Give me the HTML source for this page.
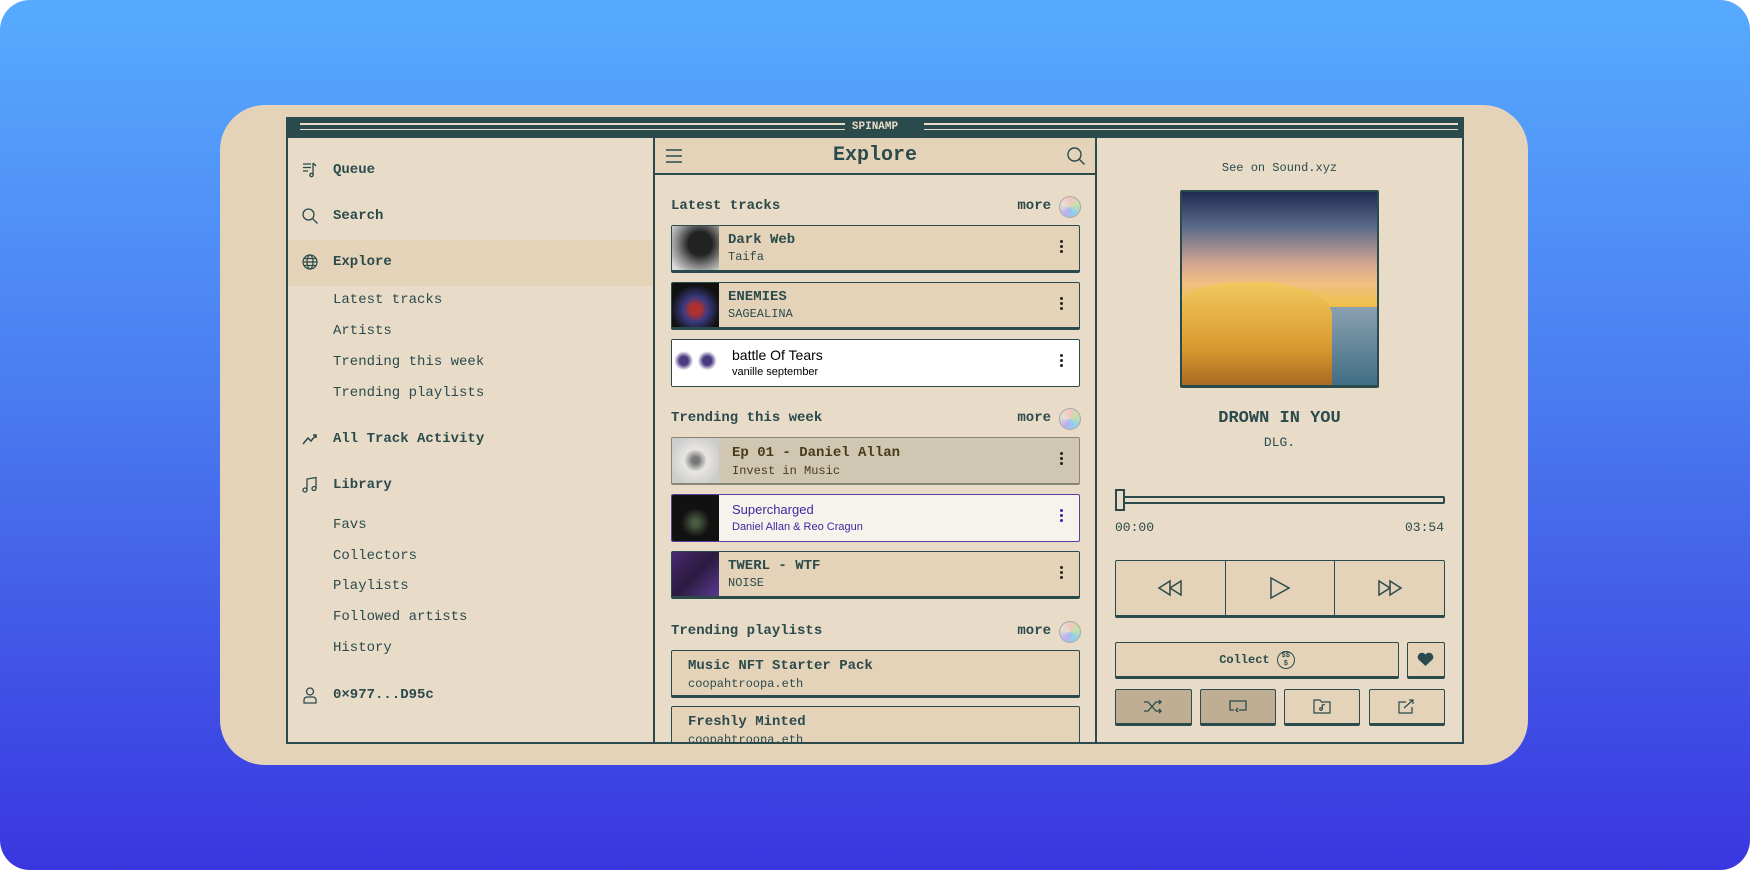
<!DOCTYPE html>
<html><head><meta charset="utf-8">
<style>
*{margin:0;padding:0;box-sizing:border-box}
body{width:1750px;height:870px;background:#fff;position:relative;overflow:hidden;font-family:"Liberation Mono",monospace;color:#2b4a4c}
.bg{position:absolute;left:0;top:0;width:1750px;height:870px;border-radius:30px;background:linear-gradient(180deg,#57abff 0%,#4a7cf0 45%,#3a36df 100%)}
.card{position:absolute;left:220px;top:105px;width:1308px;height:660px;border-radius:45px;background:#e4d3b8}
.app{position:absolute;left:286px;top:117px;width:1178px;height:627px;background:#e8dcc8;border:2px solid #2b4a4c;border-top:none}
.tb{position:absolute;left:0;top:0;width:100%;height:21px;background:#2b4a4c}
.tb .l{position:absolute;top:6px;height:7px;border-top:2px solid #e8dcc8;border-bottom:1.5px solid #e8dcc8}
.tb span{position:absolute;left:0;width:100%;text-align:center;top:4px;color:#e8dcc8;font-size:11px;font-weight:bold}
.abs{position:absolute}
.side{position:absolute;left:0;top:21px;width:367px;bottom:0;border-right:2px solid #2b4a4c}
.si{position:absolute;left:45px;font-size:14px;white-space:nowrap;transform:translateY(-50%)}
.si.b{font-weight:bold}
.ic{position:absolute;left:13px;transform:translateY(-50%)}
.mid{position:absolute;left:367px;top:21px;width:442px;bottom:0;border-right:2px solid #2b4a4c;overflow:hidden}
.mh{position:absolute;left:0;top:0;width:100%;height:37px;background:#e4d3b8;border-bottom:2px solid #2b4a4c}
.sec{position:absolute;left:16px;right:14px;font-size:14px;font-weight:bold}
.sec .m{position:absolute;right:30px;top:0}
.sec .c{position:absolute;right:0;top:-2px;width:22px;height:22px;border-radius:50%;background:conic-gradient(#f0c6c0,#c8e0a8,#8fd0e8,#b8b0f0,#e8e0d0,#f0c6c0);border:1px solid #aaa}
.tr{position:absolute;left:16px;width:409px;height:48px;background:#e4d3b8;border:1.5px solid #2b4a4c;border-bottom-width:3px;border-radius:2px;overflow:hidden}
.tr .th{position:absolute;left:0;top:0;width:47px;height:100%}
.tr .t{position:absolute;left:56px;top:6px;font-size:14px;font-weight:bold;white-space:nowrap}
.tr .a{position:absolute;left:56px;top:24px;font-size:12px;white-space:nowrap}
.tr .d{position:absolute;right:16px;top:14px;width:3px}
.tr .d i{display:block;width:3px;height:3px;background:#222;border-radius:50%;margin-bottom:2px}
.sans{font-family:"Liberation Sans",sans-serif}
.right{position:absolute;left:809px;top:21px;right:0;bottom:0}
.btn{position:absolute;background:#e4d3b8;border:1.5px solid #2b4a4c;border-bottom-width:3px;border-radius:2px}
</style></head><body>
<div class="bg"></div>
<div class="card"></div>
<div class="app">
 <div class="tb"><div class="l" style="left:12px;width:545px"></div><div class="l" style="left:636px;width:534px"></div><span>SPINAMP</span></div>
 <div class="side">
  <div class="abs" style="left:0;top:102px;width:365px;height:46px;background:#e4d3b8"></div>
  <svg class="ic" style="top:32px" width="18" height="18" viewBox="0 0 18 18" fill="none" stroke="#2b4a4c" stroke-width="1.3"><path d="M2 3h8M2 6.5h8M2 10h5M12 2v12M12 2l3 3"/><circle cx="10.5" cy="14" r="1.7"/></svg>
  <div class="si b" style="top:32px">Queue</div>
  <svg class="ic" style="top:78px" width="18" height="18" viewBox="0 0 18 18" fill="none" stroke="#2b4a4c" stroke-width="1.3"><circle cx="7.5" cy="7.5" r="5.5"/><path d="M11.5 11.5l5 5"/></svg>
  <div class="si b" style="top:78px">Search</div>
  <svg class="ic" style="top:124px" width="18" height="18" viewBox="0 0 18 18" fill="none" stroke="#2b4a4c" stroke-width="1.2"><circle cx="9" cy="9" r="7"/><ellipse cx="9" cy="9" rx="3" ry="7"/><path d="M2 9h14M3 5.5h12M3 12.5h12"/></svg>
  <div class="si b" style="top:124px">Explore</div>
  <div class="si" style="top:162px">Latest tracks</div>
  <div class="si" style="top:193px">Artists</div>
  <div class="si" style="top:224px">Trending this week</div>
  <div class="si" style="top:255px">Trending playlists</div>
  <svg class="ic" style="top:301px" width="18" height="18" viewBox="0 0 18 18" fill="none" stroke="#2b4a4c" stroke-width="1.5"><path d="M2 14l5-6 3 3 5-6M12 5h3v3"/></svg>
  <div class="si b" style="top:301px">All Track Activity</div>
  <svg class="ic" style="top:347px" width="18" height="18" viewBox="0 0 18 18" fill="none" stroke="#2b4a4c" stroke-width="1.3"><path d="M6 14V3l9-1.5v11"/><circle cx="4" cy="14" r="2"/><circle cx="13" cy="12.5" r="2"/></svg>
  <div class="si b" style="top:347px">Library</div>
  <div class="si" style="top:387px">Favs</div>
  <div class="si" style="top:418px">Collectors</div>
  <div class="si" style="top:448px">Playlists</div>
  <div class="si" style="top:479px">Followed artists</div>
  <div class="si" style="top:510px">History</div>
  <svg class="ic" style="top:557px" width="18" height="18" viewBox="0 0 18 18" fill="none" stroke="#2b4a4c" stroke-width="1.3"><circle cx="9" cy="5.5" r="3.5"/><path d="M3 17v-3a3 3 0 0 1 3-3h6a3 3 0 0 1 3 3v3z"/></svg>
  <div class="si b" style="top:557px">0×977...D95c</div>
 </div>
 <div class="mid">
  <div class="mh">
   <svg class="abs" style="left:10px;top:10px" width="18" height="16" viewBox="0 0 18 16" stroke="#2b4a4c" stroke-width="1.5"><path d="M1 2h16M1 8h16M1 14h16"/></svg>
   <div class="abs" style="left:0;width:100%;text-align:center;top:6px;font-size:20px;font-weight:bold">Explore</div>
   <svg class="abs" style="left:411px;top:8px" width="20" height="20" viewBox="0 0 20 20" fill="none" stroke="#2b4a4c" stroke-width="1.4"><circle cx="8.5" cy="8.5" r="6.5"/><path d="M13 13l5.5 5.5"/></svg>
  </div>
  <div class="sec" style="top:60px">Latest tracks<span class="m">more</span><span class="c"></span></div>
  <div class="tr" style="top:87px"><div class="th" style="background:radial-gradient(circle at 60% 40%,#222 30%,#888 60%,#ddd 90%)"></div><div class="t">Dark Web</div><div class="a">Taifa</div><div class="d"><i></i><i></i><i></i></div></div>
  <div class="tr" style="top:144px"><div class="th" style="background:radial-gradient(circle at 50% 60%,#b03030 15%,#3a3a80 35%,#111 70%)"></div><div class="t">ENEMIES</div><div class="a">SAGEALINA</div><div class="d"><i></i><i></i><i></i></div></div>
  <div class="tr sans" style="top:201px;background:#fff;border-bottom-width:1.5px"><div class="th" style="background:radial-gradient(circle at 25% 45%,#4a3a80 10%,#fff 22%),radial-gradient(circle at 75% 45%,#4a3a80 10%,#fff 22%);background-blend-mode:multiply"></div><div class="t" style="left:60px;top:7px;font-weight:normal;color:#000;font-size:14px">battle Of Tears</div><div class="a" style="left:60px;top:26px;color:#000;font-size:11px">vanille september</div><div class="d"><i></i><i></i><i></i></div></div>
  <div class="sec" style="top:272px">Trending this week<span class="m">more</span><span class="c"></span></div>
  <div class="tr" style="top:299px;background:#cfc7b1;border-bottom-width:2px;border-color:#8a8676"><div class="th" style="background:radial-gradient(circle,#777 10%,#e8e6e0 35%,#ccc 80%)"></div><div class="t" style="left:60px;top:7px;color:#4a3a1a">Ep 01 - Daniel Allan</div><div class="a" style="left:60px;top:26px;color:#4a3a1a">Invest in Music</div><div class="d"><i></i><i></i><i></i></div></div>
  <div class="tr sans" style="top:356px;background:#f6f2ec;border-color:#5a3fa0;border-bottom-width:1.5px"><div class="th" style="background:radial-gradient(circle at 50% 60%,#4a5a40 8%,#111 40%)"></div><div class="t" style="left:60px;top:7px;font-weight:normal;color:#3b2aa0;font-size:13px">Supercharged</div><div class="a" style="left:60px;top:26px;color:#3b2aa0;font-size:11px">Daniel Allan &amp; Reo Cragun</div><div class="d"><i style="background:#3b2aa0"></i><i style="background:#3b2aa0"></i><i style="background:#3b2aa0"></i></div></div>
  <div class="tr" style="top:413px"><div class="th" style="background:linear-gradient(135deg,#4a2a70,#2a1a40 50%,#5a3a90)"></div><div class="t">TWERL - WTF</div><div class="a">NOISE</div><div class="d"><i></i><i></i><i></i></div></div>
  <div class="sec" style="top:485px">Trending playlists<span class="m">more</span><span class="c"></span></div>
  <div class="tr" style="top:512px"><div class="t" style="left:16px;top:7px">Music NFT Starter Pack</div><div class="a" style="left:16px;top:26px">coopahtroopa.eth</div></div>
  <div class="tr" style="top:568px"><div class="t" style="left:16px;top:7px">Freshly Minted</div><div class="a" style="left:16px;top:26px">coopahtroopa.eth</div></div>
 </div>
 <div class="right">
  <div class="abs" style="left:0;width:100%;text-align:center;top:23px;font-size:12px">See on Sound.xyz</div>
  <div class="abs" style="left:83px;top:52px;width:199px;height:198px;border:2px solid #2b4a4c;border-bottom-width:3px;border-radius:2px;overflow:hidden;background:linear-gradient(180deg,#1f2a50 0%,#5a6a8a 18%,#d8a890 38%,#f0c080 48%,#f0c050 58%,#d89030 75%,#b86a20 100%)">
   <div class="abs" style="right:0;top:115px;width:50px;height:85px;background:linear-gradient(180deg,#8aa0b0,#3a6a80)"></div>
   <div class="abs" style="left:0;top:90px;width:150px;height:110px;background:linear-gradient(180deg,#f2c860,#d89a30 60%,#a06020);border-radius:40% 50% 0 0/20% 30% 0 0"></div>
  </div>
  <div class="abs" style="left:0;width:100%;text-align:center;top:271px;font-size:17px;font-weight:bold">DROWN IN YOU</div>
  <div class="abs" style="left:0;width:100%;text-align:center;top:297px;font-size:13px">DLG.</div>
  <div class="abs" style="left:18px;top:358px;width:330px;height:8px;border:2px solid #2b4a4c;border-radius:2px"></div>
  <div class="abs" style="left:18px;top:351px;width:10px;height:22px;border:2.5px solid #2b4a4c;background:#e8dcc8"></div>
  <div class="abs" style="left:18px;top:382px;font-size:13px">00:00</div>
  <div class="abs" style="right:18px;top:382px;font-size:13px">03:54</div>
  <div class="btn" style="left:18px;top:422px;width:330px;height:58px;display:flex">
   <div style="flex:1;border-right:1px solid #2b4a4c;display:flex;align-items:center;justify-content:center"><svg width="26" height="18" viewBox="0 0 26 18" fill="none" stroke="#2b4a4c" stroke-width="1.5"><path d="M13 2L2 9l11 7zM24 2L13 9l11 7z"/></svg></div>
   <div style="flex:1;border-right:1px solid #2b4a4c;display:flex;align-items:center;justify-content:center"><svg width="22" height="24" viewBox="0 0 22 24" fill="none" stroke="#2b4a4c" stroke-width="1.5"><path d="M2 2l18 10L2 22z"/></svg></div>
   <div style="flex:1;display:flex;align-items:center;justify-content:center"><svg width="26" height="18" viewBox="0 0 26 18" fill="none" stroke="#2b4a4c" stroke-width="1.5"><path d="M2 2l11 7-11 7zM13 2l11 7-11 7z"/></svg></div>
  </div>
  <div class="btn" style="left:18px;top:504px;width:284px;height:37px;text-align:center;font-size:12px;font-weight:bold;padding-top:8px">Collect <span style="display:inline-block;width:18px;height:18px;border:1.3px solid #2b4a4c;border-radius:50%;vertical-align:middle;font-size:7px;line-height:8px">$$<br>$</span></div>
  <div class="btn" style="left:310px;top:504px;width:38px;height:37px"><svg class="abs" style="left:9px;top:9px" width="17" height="15" viewBox="0 0 17 15"><path d="M8.5 14L1.5 7.5A3.8 3.8 0 0 1 8.5 2.5 3.8 3.8 0 0 1 15.5 7.5z" fill="#2b4a4c"/></svg></div>
  <div class="btn" style="left:18px;top:551px;width:77px;height:37px;background:#bfae94"><svg class="abs" style="left:27px;top:9px" width="20" height="15" viewBox="0 0 20 15" fill="none" stroke="#2b4a4c" stroke-width="1.3"><path d="M1 3h4l8 9h5M1 12h4l8-9h5M16 1l2 2-2 2M16 10l2 2-2 2"/></svg></div>
  <div class="btn" style="left:103px;top:551px;width:76px;height:37px;background:#bfae94"><svg class="abs" style="left:27px;top:9px" width="20" height="15" viewBox="0 0 20 15" fill="none" stroke="#2b4a4c" stroke-width="1.3"><path d="M6 11H2V2h16v9h-7M10 9l-2 2 2 2"/></svg></div>
  <div class="btn" style="left:187px;top:551px;width:76px;height:37px"><svg class="abs" style="left:28px;top:8px" width="18" height="16" viewBox="0 0 18 16" fill="none" stroke="#2b4a4c" stroke-width="1.2"><path d="M1 2h6l1.5 2H17v11H1z"/><circle cx="8" cy="11" r="1.3"/><path d="M9.3 11V7l2.5-.5"/></svg></div>
  <div class="btn" style="left:272px;top:551px;width:76px;height:37px"><svg class="abs" style="left:28px;top:8px" width="18" height="16" viewBox="0 0 18 16" fill="none" stroke="#2b4a4c" stroke-width="1.2"><path d="M8 4H1v11h13V9M6 10l9-8M11 2h4v4"/></svg></div>
 </div>
</div>
</body></html>
